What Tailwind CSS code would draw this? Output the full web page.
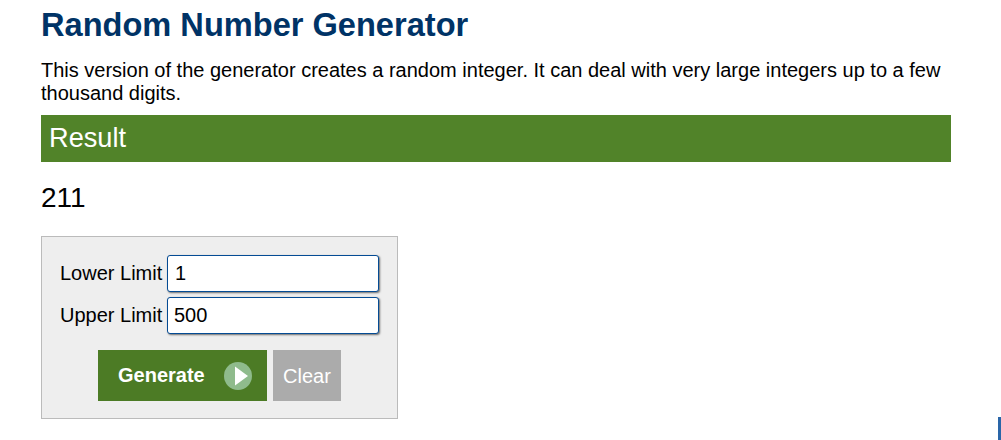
<!DOCTYPE html>
<html>
<head>
<meta charset="utf-8">
<script src="https://cdn.jsdelivr.net/npm/@tailwindcss/browser@4"></script>
</head>
<body class="relative h-[440px] overflow-hidden bg-white font-['Liberation_Sans',Arial,sans-serif] text-black">
<main class="ml-[41px] w-[910px]">
  <h1 class="pt-[7px] text-[32.6px] leading-[36px] font-bold text-[#003366]">Random Number Generator</h1>
  <p class="mt-[16px] text-[20px] leading-[23px]">This version of the generator creates a random integer. It can deal with very large integers up to a few thousand digits.</p>
  <h2 class="mt-[10px] flex h-[47px] items-center bg-[#518329] pl-[8px] text-[27.2px] text-white">Result</h2>
  <div class="mt-[19px] text-[28px] leading-[34px]">211</div>
  <form class="mt-[21px] flex h-[183px] w-[357px] flex-col border border-[#bbbbbb] bg-[#eeeeee] pt-[18px]">
    <div class="flex items-center">
      <label class="ml-[18px] w-[107px] text-[20px] leading-[21px] whitespace-nowrap">Lower Limit</label>
      <input class="h-[37px] w-[212px] rounded-[3px] border border-[#044b94] bg-white pl-[7px] text-[20px] shadow-[1px_1px_2px_rgba(0,0,0,0.55)]" value="1">
    </div>
    <div class="mt-[5px] flex items-center">
      <label class="ml-[18px] w-[107px] text-[20px] leading-[21px] whitespace-nowrap">Upper Limit</label>
      <input class="h-[37px] w-[212px] rounded-[3px] border border-[#044b94] bg-white pl-[6px] text-[20px] shadow-[1px_1px_2px_rgba(0,0,0,0.55)]" value="500">
    </div>
    <div class="mt-[16px] ml-[56px] flex gap-[6px]">
      <button type="button" class="flex h-[51px] w-[169px] items-center bg-[#4c7b25] pl-[20px] text-[20px] font-bold text-white">
        <span class="pb-[2px]">Generate</span>
        <svg class="ml-[19px]" width="28" height="28" viewBox="0 0 28 28"><circle cx="14" cy="14" r="14" fill="#8fbb8c"/><path d="M11 4.5 L24 14 L11 23.5 Z" fill="#ffffff"/></svg>
      </button>
      <button type="button" class="h-[51px] w-[68px] bg-[#ababab] text-[20px] text-white">Clear</button>
    </div>
  </form>
</main>
<div class="absolute top-[417px] left-[998px] h-[23px] w-[3px] bg-[#2a66a8]"></div>
</body>
</html>
